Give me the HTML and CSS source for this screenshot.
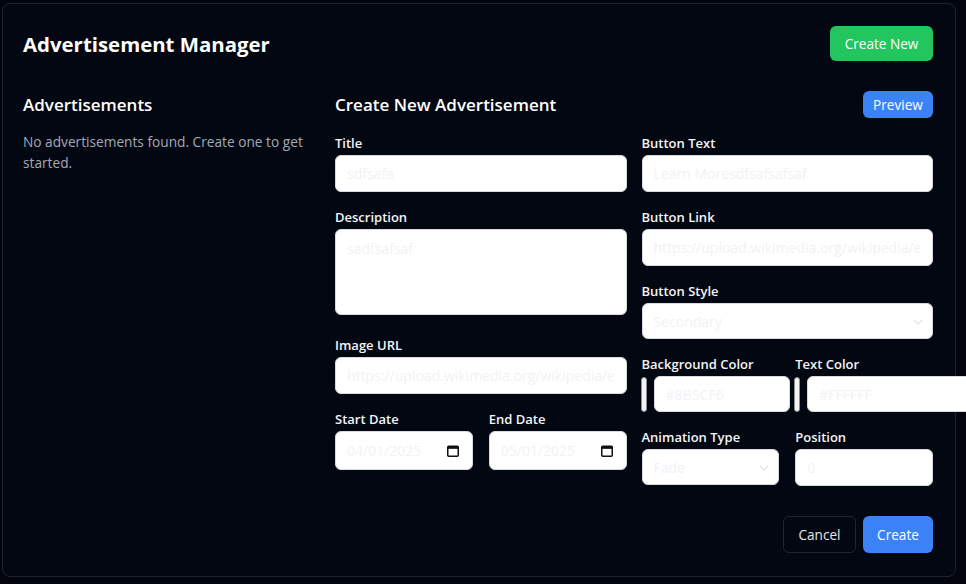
FILE: index.html
```html
<!DOCTYPE html>
<html lang="en">
<head>
<meta charset="utf-8">
<title>Advertisement Manager</title>
<link rel="stylesheet" href="styles.css">
</head>
<body>
<div class="page">
  <div class="card">
    <header class="card-header">
      <h1 class="page-title">Advertisement Manager</h1>
      <button class="btn btn-green">Create New</button>
    </header>
    <div class="layout">
      <aside class="list-col">
        <h2 class="section-title">Advertisements</h2>
        <p class="empty-text">No advertisements found. Create one to get started.</p>
      </aside>
      <section class="form-col">
        <div class="form-head">
          <h2 class="form-title">Create New Advertisement</h2>
          <button class="btn btn-blue btn-small">Preview</button>
        </div>
        <div class="form-grid">
          <div class="form-side">
            <div class="field">
              <label class="label">Title</label>
              <input class="input" type="text" value="sdfsafa">
            </div>
            <div class="field">
              <label class="label">Description</label>
              <textarea class="input textarea">sadfsafsaf</textarea>
            </div>
            <div class="field">
              <label class="label">Image URL</label>
              <input class="input" type="text" value="https://upload.wikimedia.org/wikipedia/en/">
            </div>
            <div class="pair">
              <div class="field">
                <label class="label">Start Date</label>
                <div class="with-icon">
                  <input class="input input-date" type="text" value="04/01/2025">
                  <svg class="cal-icon" width="12" height="12" viewBox="0 0 12 12"><rect x="0.75" y="1.25" width="10.5" height="10" rx="1" fill="none" stroke="#111" stroke-width="1.5"/><rect x="0.75" y="1.25" width="10.5" height="2.6" fill="#111"/></svg>
                </div>
              </div>
              <div class="field">
                <label class="label">End Date</label>
                <div class="with-icon">
                  <input class="input input-date" type="text" value="05/01/2025">
                  <svg class="cal-icon" width="12" height="12" viewBox="0 0 12 12"><rect x="0.75" y="1.25" width="10.5" height="10" rx="1" fill="none" stroke="#111" stroke-width="1.5"/><rect x="0.75" y="1.25" width="10.5" height="2.6" fill="#111"/></svg>
                </div>
              </div>
            </div>
          </div>
          <div class="form-side">
            <div class="field">
              <label class="label">Button Text</label>
              <input class="input" type="text" value="Learn Moresdfsafsafsaf">
            </div>
            <div class="field">
              <label class="label">Button Link</label>
              <input class="input" type="text" value="https://upload.wikimedia.org/wikipedia/en/">
            </div>
            <div class="field">
              <label class="label">Button Style</label>
              <div class="with-icon">
                <select class="input select"><option>Secondary</option></select>
                <svg class="chevron" width="10" height="6" viewBox="0 0 10 6"><path d="M1 1l4 4 4-4" fill="none" stroke="#e3e5e9" stroke-width="1.4"/></svg>
              </div>
            </div>
            <div class="pair">
              <div class="field">
                <label class="label">Background Color</label>
                <div class="color-row">
                  <span class="swatch"></span>
                  <input class="input color-text" type="text" value="#8B5CF6">
                </div>
              </div>
              <div class="field">
                <label class="label">Text Color</label>
                <div class="color-row">
                  <span class="swatch"></span>
                  <input class="input color-text color-text-wide" type="text" value="#FFFFFF">
                </div>
              </div>
            </div>
            <div class="pair">
              <div class="field">
                <label class="label">Animation Type</label>
                <div class="with-icon">
                  <select class="input select"><option>Fade</option></select>
                  <svg class="chevron" width="10" height="6" viewBox="0 0 10 6"><path d="M1 1l4 4 4-4" fill="none" stroke="#e3e5e9" stroke-width="1.4"/></svg>
                </div>
              </div>
              <div class="field">
                <label class="label">Position</label>
                <input class="input" type="text" value="0">
              </div>
            </div>
          </div>
        </div>
        <div class="form-actions">
          <button class="btn btn-outline">Cancel</button>
          <button class="btn btn-blue">Create</button>
        </div>
      </section>
    </div>
  </div>
</div>
</body>
</html>
```

FILE: styles.css
```css
* { box-sizing: border-box; }
html, body { margin: 0; padding: 0; }
body {
  background: #02050e;
  font-family: "Open Sans", "Noto Sans", sans-serif;
  color: #f3f4f6;
  width: 966px;
  height: 584px;
  overflow: hidden;
}
.page { padding: 3px 10px 0 2px; }
.card {
  background: #030712;
  border: 1px solid #1c2230;
  border-radius: 8px;
  padding: 22px 22px 23px 20px;
  height: 574px;
}
.card-header {
  display: flex;
  justify-content: space-between;
  align-items: center;
  height: 35px;
  margin-bottom: 30px;
}
.page-title { margin: 0; font-size: 20.4px; font-weight: 700; color: #fff; }
.btn {
  font-family: inherit;
  font-size: 13.6px;
  border: none;
  border-radius: 6px;
  color: #fff;
  padding: 0;
  height: 35px;
  white-space: nowrap;
  text-align: center;
  cursor: pointer;
}
.btn-green { background: #22c55e; width: 103px; }
.btn-blue { background: #3b82f6; height: 37px; width: 70px; }
.btn-small { height: 27px; width: 70px; }
.btn-outline { background: #030712; border: 1px solid #1f2633; color: #e5e7eb; height: 37px; width: 73px; }
.layout { display: grid; grid-template-columns: 292px minmax(0, 1fr); column-gap: 20px; }
.section-title { margin: 0; font-size: 17px; font-weight: 600; line-height: 27px; color: #fff; }
.empty-text { margin: 13px 0 0; font-size: 13.7px; line-height: 21px; color: #a3a9b4; }
.form-head { display: flex; justify-content: space-between; align-items: center; height: 27px; margin-bottom: 15px; }
.form-title { margin: 0; font-size: 17px; font-weight: 600; color: #fff; }
.form-grid { display: grid; grid-template-columns: minmax(0, 1fr) minmax(0, 1fr); column-gap: 15px; }
.form-side { display: flex; flex-direction: column; gap: 15px; min-width: 0; }
.field { display: flex; flex-direction: column; min-width: 0; }
.label { font-size: 13px; font-weight: 600; line-height: 20px; margin-bottom: 2px; color: #f3f4f6; }
.input {
  font-family: inherit;
  font-size: 14px;
  height: 37px;
  border: 1px solid #d7dbe1;
  border-radius: 6px;
  background: #fff;
  color: #f1f2f5;
  padding: 0 11px;
  width: 100%;
  outline: none;
}
.textarea { height: 86px; padding: 9px 11px; resize: none; margin-bottom: 5px; display: block; }
.pair { display: grid; grid-template-columns: minmax(0, 1fr) minmax(0, 1fr); column-gap: 16px; }
.with-icon { position: relative; }
.input-date { height: 39px; }
.cal-icon { position: absolute; right: 14px; top: 14px; }
.select { appearance: none; -webkit-appearance: none; height: 36px; }
.chevron { position: absolute; right: 10px; top: 16px; }
.color-row { display: flex; align-items: center; gap: 7px; margin-left: -1px; }
.swatch {
  flex: none;
  width: 6px;
  height: 35px;
  border: 1px solid #8a8f98;
  border-radius: 3px;
  background: #f4f4f4;
}
.color-text { flex: none; width: 136px; height: 36px; }
.color-text-wide { width: 175px; }
.form-actions { display: flex; justify-content: flex-end; gap: 7px; margin-top: 30px; }
```
